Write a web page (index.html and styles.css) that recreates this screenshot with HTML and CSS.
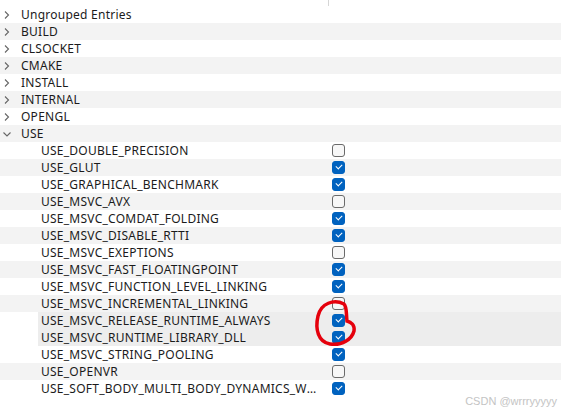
FILE: index.html
```html
<!DOCTYPE html>
<html lang="en">

<head>
    <meta charset="UTF-8">
    <meta name="viewport" content="width=device-width, initial-scale=1.0">
    <title>CMake Entries</title>
    <link rel="stylesheet" href="styles.css">
</head>

<body>
    <div class="tree">
        <div class="head"><div class="head-name"></div></div>

        <div class="row group"><span class="arrow"><svg width="10" height="10" viewBox="0 0 10 10"><path d="M3 1.5 L6.5 5 L3 8.5"/></svg></span><span class="name">Ungrouped Entries</span></div>
        <div class="row group"><span class="arrow"><svg width="10" height="10" viewBox="0 0 10 10"><path d="M3 1.5 L6.5 5 L3 8.5"/></svg></span><span class="name">BUILD</span></div>
        <div class="row group"><span class="arrow"><svg width="10" height="10" viewBox="0 0 10 10"><path d="M3 1.5 L6.5 5 L3 8.5"/></svg></span><span class="name">CLSOCKET</span></div>
        <div class="row group"><span class="arrow"><svg width="10" height="10" viewBox="0 0 10 10"><path d="M3 1.5 L6.5 5 L3 8.5"/></svg></span><span class="name">CMAKE</span></div>
        <div class="row group"><span class="arrow"><svg width="10" height="10" viewBox="0 0 10 10"><path d="M3 1.5 L6.5 5 L3 8.5"/></svg></span><span class="name">INSTALL</span></div>
        <div class="row group"><span class="arrow"><svg width="10" height="10" viewBox="0 0 10 10"><path d="M3 1.5 L6.5 5 L3 8.5"/></svg></span><span class="name">INTERNAL</span></div>
        <div class="row group"><span class="arrow"><svg width="10" height="10" viewBox="0 0 10 10"><path d="M3 1.5 L6.5 5 L3 8.5"/></svg></span><span class="name">OPENGL</span></div>
        <div class="row group"><span class="arrow"><svg width="10" height="10" viewBox="0 0 10 10"><path d="M1.5 3.5 L5 7 L8.5 3.5"/></svg></span><span class="name">USE</span></div>

        <div class="row entry"><span class="name">USE_DOUBLE_PRECISION</span><span class="check"></span></div>
        <div class="row entry"><span class="name">USE_GLUT</span><span class="check on"></span></div>
        <div class="row entry"><span class="name">USE_GRAPHICAL_BENCHMARK</span><span class="check on"></span></div>
        <div class="row entry"><span class="name">USE_MSVC_AVX</span><span class="check"></span></div>
        <div class="row entry"><span class="name">USE_MSVC_COMDAT_FOLDING</span><span class="check on"></span></div>
        <div class="row entry"><span class="name">USE_MSVC_DISABLE_RTTI</span><span class="check on"></span></div>
        <div class="row entry"><span class="name">USE_MSVC_EXEPTIONS</span><span class="check"></span></div>
        <div class="row entry"><span class="name">USE_MSVC_FAST_FLOATINGPOINT</span><span class="check on"></span></div>
        <div class="row entry"><span class="name">USE_MSVC_FUNCTION_LEVEL_LINKING</span><span class="check on"></span></div>
        <div class="row entry"><span class="name">USE_MSVC_INCREMENTAL_LINKING</span><span class="check"></span></div>
        <div class="row entry sel"><span class="name">USE_MSVC_RELEASE_RUNTIME_ALWAYS</span><span class="check on"></span></div>
        <div class="row entry sel"><span class="name">USE_MSVC_RUNTIME_LIBRARY_DLL</span><span class="check on"></span></div>
        <div class="row entry"><span class="name">USE_MSVC_STRING_POOLING</span><span class="check on"></span></div>
        <div class="row entry"><span class="name">USE_OPENVR</span><span class="check"></span></div>
        <div class="row entry"><span class="name">USE_SOFT_BODY_MULTI_BODY_DYNAMICS_WORLD</span><span class="check on"></span></div>
    </div>

    <!-- red pen mark over the two checkboxes -->
    <svg class="mark" width="48" height="52" viewBox="0 0 48 52">
        <path d="M32 6 C22 1 9 5 6 18 C3 31 6 44 18 46 C30 48 40 41 42 33 C43 27 39 24 35 23 C34 15 35 9 32 6" />
    </svg>

    <div class="watermark">CSDN @wrrryyyyy</div>
</body>

</html>
```

FILE: styles.css
```css
body {
    margin: 0;
    background-color: #ffffff;
    font-family: "Noto Sans", "Open Sans", sans-serif;
    font-size: 12px;
    letter-spacing: 0.25px;
    color: #1b1b1b;
}

.tree {
    display: flex;
    flex-direction: column;
}

.head {
    height: 6px;
    display: flex;
}

.head-name {
    width: 328px;
    border-right: 1px solid #d6d6d6;
}

.row {
    height: 17px;
    display: flex;
    align-items: center;
    white-space: nowrap;
}

.row:nth-child(odd) {
    background-color: #f3f3f3;
}

.row.sel {
    background: linear-gradient(to right, #ffffff 38px, #ededed 38px);
}

.arrow {
    width: 21px;
    height: 17px;
    display: flex;
    align-items: center;
    padding-left: 2px;
    box-sizing: border-box;
}

.arrow svg {
    fill: none;
    stroke: #666666;
    stroke-width: 1.1;
}

.entry .name {
    width: 277px;
    padding-left: 41px;
    margin-right: 14px;
    overflow: hidden;
    text-overflow: ellipsis;
}

.check {
    width: 13px;
    height: 13px;
    box-sizing: border-box;
    border: 1px solid #6a6a6a;
    border-radius: 3px;
    background-color: #f7f7f7;
    position: relative;
}

.check.on {
    border-color: #0062bf;
    background-color: #0062bf;
}

.check.on::after {
    content: "";
    position: absolute;
    left: 3px;
    top: 2px;
    width: 5px;
    height: 3px;
    border-left: 1px solid #ffffff;
    border-bottom: 1px solid #ffffff;
    transform: rotate(-45deg);
}

.mark {
    position: absolute;
    left: 312px;
    top: 298px;
    fill: none;
    stroke: #e5000c;
    stroke-width: 3.5;
    stroke-linecap: round;
    pointer-events: none;
}

.watermark {
    position: absolute;
    right: 4px;
    bottom: 4px;
    font-family: "Liberation Sans", Arial, sans-serif;
    font-size: 11px;
    letter-spacing: 0;
    color: #c4c4c4;
}
```
